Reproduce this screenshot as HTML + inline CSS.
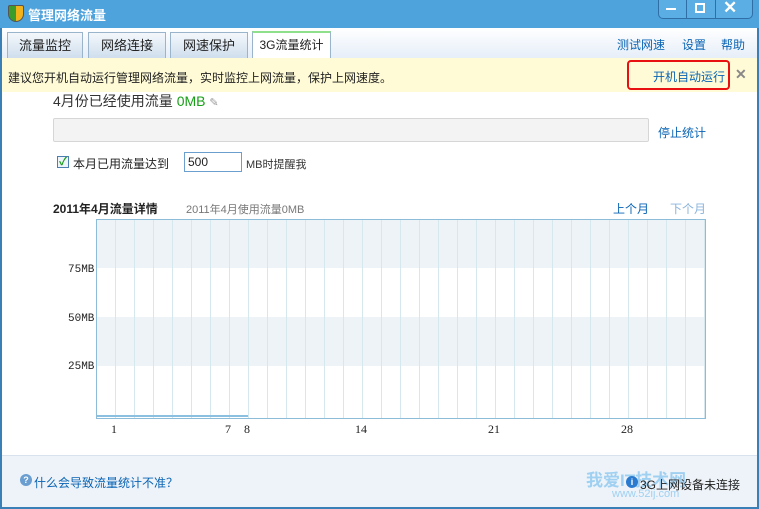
<!DOCTYPE html>
<html><head><meta charset="utf-8"><style>
*{margin:0;padding:0;box-sizing:border-box}
body{width:759px;height:509px;overflow:hidden;font-family:"Liberation Sans","Noto Sans CJK SC",sans-serif;font-size:12px;color:#222;background:#fff;position:relative}
.a{position:absolute}
.link{color:#0a64b4}
</style></head><body>
<div class="a" style="left:0;top:0;width:759px;height:509px;border:2px solid #3a7fb6;border-top:none"></div>
<div class="a" style="left:0;top:0;width:759px;height:28px;background:#4fa3dc"></div>
<div class="a" style="left:8px;top:5px;width:16px;height:17px;background:linear-gradient(90deg,#3a9c2a 50%,#f2b21a 50%);border:1px solid #555;border-radius:2px 2px 8px 8px"></div>
<div class="a" style="left:28px;top:5px;color:#fff;font-size:13px;font-weight:bold">管理网络流量</div>
<div class="a" style="left:658px;top:0;width:95px;height:19px;border:1px solid #2f6fa6;border-top:none;border-radius:0 0 5px 5px;background:#5aaee4"></div>
<div class="a" style="left:686px;top:0;width:1px;height:19px;background:#2f6fa6"></div>
<div class="a" style="left:715px;top:0;width:1px;height:19px;background:#2f6fa6"></div>
<div class="a" style="left:666px;top:8px;width:10px;height:2px;background:#fff"></div>
<div class="a" style="left:695px;top:3px;width:10px;height:10px;border:2px solid #fff"></div>
<div class="a" style="left:723px;top:-2px;color:#fff;font-size:17px;font-weight:bold">✕</div>
<div class="a" style="left:2px;top:28px;width:755px;height:30px;background:linear-gradient(#fff,#e6eef8)"></div>
<div class="a" style="left:7px;top:32px;width:76px;height:26px;border:1px solid #9ab4cc;border-bottom:none;background:linear-gradient(#f4f8fc,#cfdeed);text-align:center;line-height:25px;font-size:13px">流量监控</div>
<div class="a" style="left:88px;top:32px;width:78px;height:26px;border:1px solid #9ab4cc;border-bottom:none;background:linear-gradient(#f4f8fc,#cfdeed);text-align:center;line-height:25px;font-size:13px">网络连接</div>
<div class="a" style="left:170px;top:32px;width:78px;height:26px;border:1px solid #9ab4cc;border-bottom:none;background:linear-gradient(#f4f8fc,#cfdeed);text-align:center;line-height:25px;font-size:13px">网速保护</div>
<div class="a" style="left:252px;top:31px;width:79px;height:28px;border:1px solid #9ab4cc;border-top:2px solid #8fe08a;border-bottom:none;background:#fff;text-align:center;line-height:25px;font-size:12px">3G流量统计</div>
<div class="a link" style="left:617px;top:36px;font-size:12px">测试网速</div>
<div class="a link" style="left:682px;top:36px;font-size:12px">设置</div>
<div class="a link" style="left:721px;top:36px;font-size:12px">帮助</div>
<div class="a" style="left:2px;top:58px;width:755px;height:34px;background:#fffbd6"></div>
<div class="a" style="left:8px;top:69px;font-size:12px">建议您开机自动运行管理网络流量，实时监控上网流量，保护上网速度。</div>
<div class="a" style="left:627px;top:60px;width:103px;height:30px;border:2px solid #e81010;border-radius:4px"></div>
<div class="a link" style="left:653px;top:68px">开机自动运行</div>
<div class="a" style="left:735px;top:66px;color:#888;font-size:14px;font-weight:bold">✕</div>
<div class="a" style="left:53px;top:91px;font-size:14px;color:#333">4月份已经使用流量 <span style="color:#18a018">0MB</span> <span style="color:#999;font-size:11px">✎</span></div>
<div class="a" style="left:53px;top:118px;width:596px;height:24px;background:#f3f3f3;border:1px solid #d6d6d6;border-radius:2px"></div>
<div class="a link" style="left:658px;top:124px">停止统计</div>
<div class="a" style="left:57px;top:156px;width:12px;height:12px;border:1px solid #4a7fb0;background:#eef4fa;color:#1a9a1a;font-size:11px;line-height:10px;text-align:center;font-weight:bold">✓</div>
<div class="a" style="left:73px;top:155px">本月已用流量达到</div>
<div class="a" style="left:184px;top:152px;width:58px;height:20px;border:1px solid #6a9fd0;padding-left:3px;line-height:18px">500</div>
<div class="a" style="left:246px;top:156px;font-size:11px;color:#333">MB时提醒我</div>
<div class="a" style="left:53px;top:200px;font-weight:bold;font-size:12px">2011年4月流量详情</div>
<div class="a" style="left:186px;top:201px;color:#777;font-size:11px">2011年4月使用流量0MB</div>
<div class="a link" style="left:613px;top:200px">上个月</div>
<div class="a" style="left:670px;top:200px;color:#8ab4dc">下个月</div>
<div class="a" style="left:96px;top:219px;width:610px;height:200px;border:1px solid #8cbcd8;background:linear-gradient(#eef3f7 0 48px,#fff 48px 97px,#eef3f7 97px 146px,#fff 146px);overflow:hidden">
<div style="position:absolute;inset:0;background:repeating-linear-gradient(90deg,transparent 0 18px,#d4e8ee 18px 19px)"></div>
<div style="position:absolute;left:0;bottom:1px;width:151px;height:2px;background:#8cc0e0"></div>
</div>
<div class="a" style="left:68px;top:264px;font-family:'Liberation Mono',monospace;font-size:11px">75MB</div>
<div class="a" style="left:68px;top:313px;font-family:'Liberation Mono',monospace;font-size:11px">50MB</div>
<div class="a" style="left:68px;top:361px;font-family:'Liberation Mono',monospace;font-size:11px">25MB</div>
<div class="a" style="top:422px;left:111px;font-family:'Liberation Serif',serif;font-size:12px">1</div>
<div class="a" style="top:422px;left:225px;font-family:'Liberation Serif',serif;font-size:12px">7</div>
<div class="a" style="top:422px;left:244px;font-family:'Liberation Serif',serif;font-size:12px">8</div>
<div class="a" style="top:422px;left:355px;font-family:'Liberation Serif',serif;font-size:12px">14</div>
<div class="a" style="top:422px;left:488px;font-family:'Liberation Serif',serif;font-size:12px">21</div>
<div class="a" style="top:422px;left:621px;font-family:'Liberation Serif',serif;font-size:12px">28</div>
<div class="a" style="left:2px;top:455px;width:755px;height:52px;background:#eef3f9;border-top:1px solid #d8e2ee"></div>
<div class="a" style="left:20px;top:474px;width:12px;height:12px;border-radius:50%;background:#6a9ed0;color:#fff;font-size:9px;line-height:12px;text-align:center;font-weight:bold">?</div>
<div class="a link" style="left:34px;top:474px">什么会导致流量统计不准？</div>
<div class="a" style="left:586px;top:466px;color:#8cc8f0;font-size:17px;font-weight:bold;opacity:.8">我爱IT技术网</div>
<div class="a" style="left:612px;top:488px;color:#8cc8f0;font-size:11px;opacity:.8">www.52ij.com</div>
<div class="a" style="left:626px;top:476px;width:12px;height:12px;border-radius:50%;background:#2a7ad0;color:#fff;font-size:9px;line-height:12px;text-align:center;font-weight:bold">i</div>
<div class="a" style="left:640px;top:476px;color:#222">3G上网设备未连接</div>
</body></html>
